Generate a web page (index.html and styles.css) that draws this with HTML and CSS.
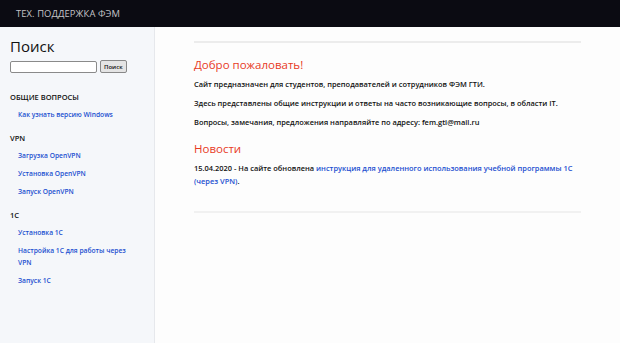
FILE: index.html
```html
<html>
<head>
  <meta charset="utf-8">
  <link rel="stylesheet" href="styles.css">
</head>
<body>
  <div class="navbar">
    <span class="brand">ТЕХ. ПОДДЕРЖКА ФЭМ</span>
  </div>
  <div class="page">
    <div class="sidebar">
      <div class="search-title">Поиск</div>
      <form class="search-form">
        <input class="search-input" type="text">
        <button class="search-button" type="button">Поиск</button>
      </form>
      <div class="nav-group first">
        <div class="nav-header">ОБЩИЕ ВОПРОСЫ</div>
        <a class="nav-link" href="#">Как узнать версию Windows</a>
      </div>
      <div class="nav-group">
        <div class="nav-header">VPN</div>
        <a class="nav-link" href="#">Загрузка OpenVPN</a>
        <a class="nav-link" href="#">Установка OpenVPN</a>
        <a class="nav-link" href="#">Запуск OpenVPN</a>
      </div>
      <div class="nav-group">
        <div class="nav-header">1С</div>
        <a class="nav-link" href="#">Установка 1С</a>
        <a class="nav-link" href="#">Настройка 1С для работы через VPN</a>
        <a class="nav-link" href="#">Запуск 1С</a>
      </div>
    </div>
    <div class="main">
      <div class="content">
        <h2 class="heading">Добро пожаловать!</h2>
        <p class="text">Сайт предназначен для студентов, преподавателей и сотрудников ФЭМ ГТИ.</p>
        <p class="text">Здесь представлены общие инструкции и ответы на часто возникающие вопросы, в области IT.</p>
        <p class="text">Вопросы, замечания, предложения направляйте по адресу: fem.gti@mail.ru</p>
        <h2 class="heading news">Новости</h2>
        <p class="text last">15.04.2020 - На сайте обновлена <a class="link" href="#">инструкция для удаленного использования учебной программы 1С (через VPN)</a>.</p>
      </div>
    </div>
  </div>
</body>
</html>
```

FILE: styles.css
```css
* {
  box-sizing: border-box;
  margin: 0;
  padding: 0;
}

body {
  font-family: "Open Sans", "Noto Sans", sans-serif;
  background-color: #fdfdfd;
  color: #111;
  height: 100vh;
  overflow: hidden;
}

.navbar {
  height: 27px;
  background-color: #0b0b12;
  display: flex;
  align-items: center;
  padding-left: 16px;
}

.brand {
  color: #c4c4c8;
  font-size: 9.4px;
  letter-spacing: 0.1px;
}

.page {
  display: flex;
  height: calc(100% - 27px);
}

.sidebar {
  width: 155px;
  background-color: #f5f7fa;
  border-right: 1px solid #e6e8ec;
  padding: 10px 10px 0 10px;
  display: flex;
  flex-direction: column;
}

.search-title {
  font-size: 15px;
  line-height: 18px;
  font-weight: 500;
  color: #111;
}

.search-form {
  display: flex;
  align-items: center;
  gap: 3px;
  margin-top: 5px;
}

.search-input {
  width: 87px;
  height: 12px;
  border: 1px solid #8a8a8a;
  border-radius: 2px;
  background: #fff;
}

.search-button {
  height: 13px;
  padding: 0 3px;
  font-family: "Open Sans", sans-serif;
  font-size: 6px;
  font-weight: 600;
  border: 1px solid #888;
  border-radius: 2px;
  background: #e4e4e4;
  color: #111;
}

.nav-group {
  display: flex;
  flex-direction: column;
  gap: 6px;
  margin-top: 12px;
}

.nav-group.first {
  margin-top: 19px;
}

.nav-header {
  font-size: 7.5px;
  font-weight: 600;
  color: #111;
  line-height: 10px;
  margin-bottom: 1px;
}

.nav-link {
  display: block;
  padding-left: 8px;
  font-size: 6.7px;
  font-weight: 600;
  line-height: 12px;
  color: #1c4fd0;
  text-decoration: none;
  width: 125px;
}

.main {
  flex: 1;
  padding: 14px 39px 0 39px;
}

.content {
  width: 387px;
  border-top: 2px solid #ececec;
  border-bottom: 2px solid #f1f1f1;
  padding: 13px 0 23px 0;
}

.heading {
  font-size: 11.5px;
  font-weight: 500;
  color: #e83a1f;
  line-height: 18px;
  margin-bottom: 4px;
}

.heading.news {
  margin-top: 11px;
}

.text {
  font-size: 7.45px;
  font-weight: 600;
  line-height: 13px;
  margin-bottom: 6px;
}

.text.last {
  margin-bottom: 0;
}

.link {
  color: #1c4fd0;
  text-decoration: none;
}
```
